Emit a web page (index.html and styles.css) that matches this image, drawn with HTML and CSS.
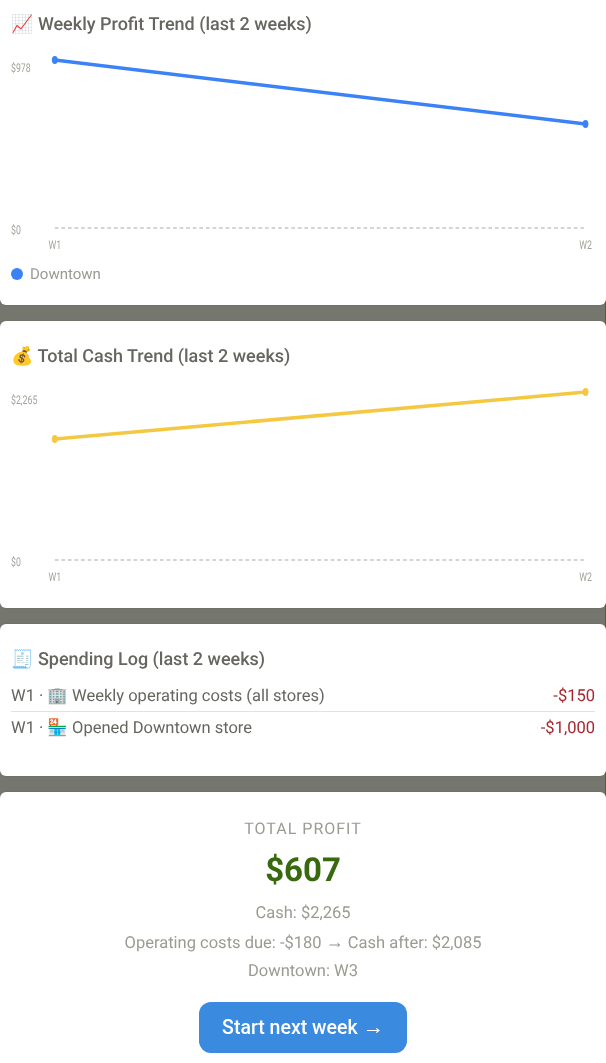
FILE: index.html
```html
<!DOCTYPE html>
<html lang="en">
<head>
<meta charset="utf-8">
<title>Weekly report</title>
<link rel="stylesheet" href="styles.css">
</head>
<body>
<main class="page">
  <section class="card card-first">
    <h2 class="card-title">📈 Weekly Profit Trend (last 2 weeks)</h2>
    <svg class="chart" viewBox="0 0 800 210" preserveAspectRatio="none">
      <line class="baseline" x1="60" y1="184" x2="787" y2="184"/>
      <polyline class="trend trend-blue" points="60,16 787,80"/>
      <circle class="dot-blue" cx="60" cy="16" r="4"/>
      <circle class="dot-blue" cx="787" cy="80" r="4"/>
      <text class="tick" x="0" y="28">$978</text>
      <text class="tick" x="0" y="190">$0</text>
      <text class="tick tick-mid" x="60" y="205">W1</text>
      <text class="tick tick-mid" x="787" y="205">W2</text>
    </svg>
    <div class="legend"><span class="legend-dot"></span><span>Downtown</span></div>
  </section>
  <section class="card card-cash">
    <h2 class="card-title">💰 Total Cash Trend (last 2 weeks)</h2>
    <svg class="chart" viewBox="0 0 800 210" preserveAspectRatio="none">
      <line class="baseline" x1="60" y1="184" x2="787" y2="184"/>
      <polyline class="trend trend-yellow" points="60,63 787,16"/>
      <circle class="dot-yellow" cx="60" cy="63" r="4"/>
      <circle class="dot-yellow" cx="787" cy="16" r="4"/>
      <text class="tick" x="0" y="28">$2,265</text>
      <text class="tick" x="0" y="190">$0</text>
      <text class="tick tick-mid" x="60" y="205">W1</text>
      <text class="tick tick-mid" x="787" y="205">W2</text>
    </svg>
  </section>
  <section class="card card-log">
    <h2 class="card-title">🧾 Spending Log (last 2 weeks)</h2>
    <ul class="log">
      <li class="log-row"><span>W1 · 🏢 Weekly operating costs (all stores)</span><span class="amount">-$150</span></li>
      <li class="log-row"><span>W1 · 🏪 Opened Downtown store</span><span class="amount">-$1,000</span></li>
    </ul>
  </section>
  <section class="card card-summary">
    <div class="summary-label">TOTAL PROFIT</div>
    <div class="summary-value">$607</div>
    <div class="summary-line">Cash: $2,265</div>
    <div class="summary-line summary-costs">Operating costs due: -$180 <span class="arrow">→</span> Cash after: $2,085</div>
    <div class="summary-line">Downtown: W3</div>
    <button class="next-btn" type="button">Start next week <span class="arrow">→</span></button>
  </section>
</main>
</body>
</html>
```
FILE: styles.css
```css
html, body { margin: 0; padding: 0; }
body {
  background: #75766e;
  font-family: Roboto, "Liberation Sans", "Noto Sans", sans-serif;
  text-rendering: geometricPrecision;
  overflow: hidden;
  height: 1063px;
}
.page {
  display: flex;
  flex-direction: column;
  gap: 16px;
  background: linear-gradient(to left, #4f6133 1px, #75766e 1px);
}
.card {
  flex: none;
  box-sizing: border-box;
  background: #fff;
  border-radius: 6px;
  padding: 24px 11px 0;
  box-shadow: 0 0 2px rgba(0,0,0,.12);
  will-change: transform;
}
.card-first { padding-top: 13px; border-radius: 0 0 6px 6px; height: 305px; }
.card-cash { height: 287px; }
.card-log { height: 152px; }
.card-title {
  margin: 0;
  font-size: 18px;
  line-height: 24px;
  font-weight: 500;
  color: #666560;
}
.chart { display: block; width: 584px; height: 210px; margin-top: 7px; overflow: visible; }
.baseline { stroke: #d4d4d4; stroke-width: 2; stroke-dasharray: 5 4; }
.trend { fill: none; stroke-width: 3.5; }
.trend-blue { stroke: #3b82f6; }
.trend-yellow { stroke: #f5c842; }
.dot-blue { fill: #3b82f6; }
.dot-yellow { fill: #f5c842; }
.tick { font-size: 12px; fill: #a3a39b; font-family: Roboto, sans-serif; }
.tick-mid { text-anchor: middle; }
.legend { display: flex; align-items: center; gap: 7px; margin-top: 11px; font-size: 15px; line-height: 18px; color: #9b9b93; }
.legend-dot { width: 12px; height: 12px; border-radius: 50%; background: #3b82f6; }
.log { list-style: none; margin: 8px 0 0; padding: 0; }
.log-row {
  display: flex;
  justify-content: space-between;
  padding-top: 2px;
  font-size: 16.5px;
  line-height: 29px;
  color: #666560;
  border-bottom: 1px solid #e2e2e0;
}
.log-row:last-child { border-bottom: 0; }
.amount { color: #a8262d; }
.card-summary { text-align: center; padding-top: 27px; height: 280px; }
.summary-label { font-size: 16px; line-height: 20px; letter-spacing: 1px; color: #9b9b93; }
.summary-value { margin-top: 12px; font-size: 33px; line-height: 40px; font-weight: 700; color: #38690f; }
.summary-line { font-size: 16.5px; line-height: 29px; color: #9b9b93; }
.summary-value + .summary-line { margin-top: 8px; }
.summary-costs { padding-top: 1px; margin-bottom: -1px; }
.arrow { font-family: "Liberation Sans", sans-serif; font-size: 1.1em; line-height: 0; }
.next-btn {
  display: inline-block;
  margin-top: 16px;
  width: 208px;
  height: 51px;
  border: 0;
  border-radius: 12px;
  background: #3a8ae0;
  color: #fff;
  font-family: inherit;
  font-size: 19.5px;
  font-weight: 500;
}
```
